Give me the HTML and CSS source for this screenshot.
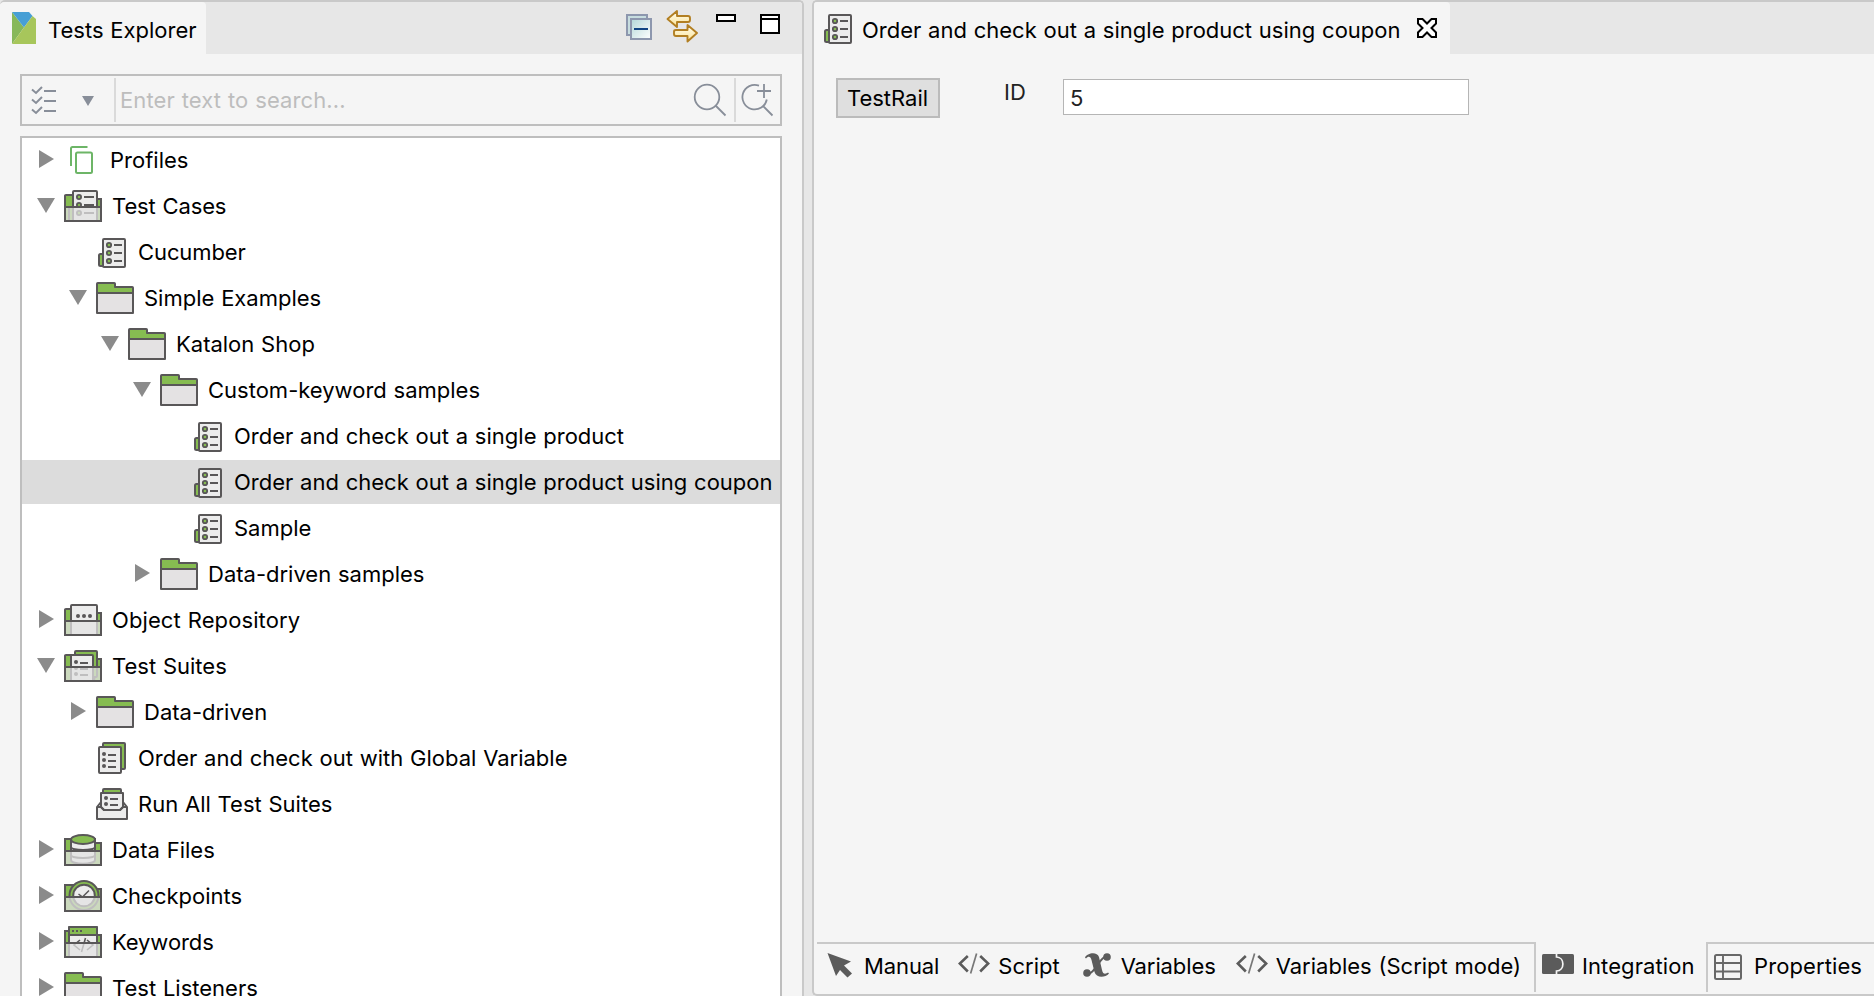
FILE: index.html
```html
<!DOCTYPE html>
<html lang="en">
<head>
<meta charset="utf-8">
<title>Tests Explorer</title>
<link rel="stylesheet" href="styles.css">
</head>
<body>
<svg class="sprite" aria-hidden="true">
  <defs>
    <symbol id="i-closed" viewBox="0 0 18 44"><path d="M2 12L17 21L2 30Z" fill="#8b8b8b"/></symbol>
    <symbol id="i-open" viewBox="0 0 18 44"><path d="M0 14H18L9 29Z" fill="#8b8b8b"/></symbol>
    <symbol id="i-profiles" viewBox="0 0 32 32"><g fill="none" stroke="#6db567" stroke-width="2"><path d="M21.500 3H6.500Q5 3 5 4.500V22"/><rect x="10" y="8.500" width="16" height="20.500" rx="1.500"/></g></symbol>
    <symbol id="i-folder" viewBox="0 0 38 32"><path d="M1 11V1.800Q1 1 1.800 1H18.200Q19 1 19 1.800V5H36.200Q37 5 37 5.800V11Z" fill="#86bc51"/><path d="M1 11H37V31H1Z" fill="#e4e2e3"/><path d="M1 11V1.800Q1 1 1.800 1H18.200Q19 1 19 1.800V5H36.200Q37 5 37 5.800V31H1V11H37" fill="none" stroke="#595758" stroke-width="2" stroke-linejoin="round"/></symbol>
    <symbol id="i-case" viewBox="0 0 32 32"><rect x="3" y="18" width="6" height="12" rx="1.500" fill="#86bc51" stroke="#595758" stroke-width="2"/><rect x="7" y="3" width="22" height="28" rx="1" fill="#ececec" stroke="#595758" stroke-width="2"/><g fill="#86bc51" stroke="#595758" stroke-width="1.800"><circle cx="13" cy="9" r="2.200"/><circle cx="13" cy="17" r="2.200"/><circle cx="13" cy="25" r="2.200"/></g><path d="M18 9H26M18 17H26M18 25H26" stroke="#595758" stroke-width="2"/></symbol>
    <symbol id="i-veil" viewBox="0 0 38 32"><rect x="1" y="17" width="36" height="14" fill="#e2e2e2" fill-opacity=".74"/><rect x="1" y="17" width="36" height="14" fill="none" stroke="#595758" stroke-width="2" stroke-linejoin="round"/></symbol>
    <symbol id="i-cases" viewBox="0 0 38 32">
      <path d="M1 31V5.500Q1 5 2 5H9V31ZM33 9H37V31H33Z" fill="#86bc51" stroke="#595758" stroke-width="2"/>
      <rect x="9" y="1" width="24" height="30" rx="1" fill="#ececec" stroke="#595758" stroke-width="2"/>
      <g fill="#86bc51" stroke="#595758" stroke-width="1.800"><circle cx="15" cy="7" r="2.100"/><circle cx="15" cy="15" r="2.100"/><circle cx="15" cy="23" r="2.100"/></g><path d="M20 7H30M20 15H30M20 23H30" stroke="#595758" stroke-width="2"/><path d="M5 18V31" stroke="#595758" stroke-width="2"/>
      <use href="#i-veil"/>
    </symbol>
    <symbol id="i-objects" viewBox="0 0 38 32">
      <path d="M1 31V5.500Q1 5 2 5H7V31ZM33 9H37V31H33Z" fill="#86bc51" stroke="#595758" stroke-width="2"/>
      <rect x="7" y="1" width="26" height="30" rx="1" fill="#ececec" stroke="#595758" stroke-width="2"/>
      <g fill="#595758"><circle cx="14" cy="12" r="2"/><circle cx="20" cy="12" r="2"/><circle cx="26" cy="12" r="2"/></g>
      <use href="#i-veil"/>
    </symbol>
    <symbol id="i-suites" viewBox="0 0 38 32">
      <path d="M1 31V5.500Q1 5 2 5H7V31ZM33 9H37V31H30Z" fill="#86bc51" stroke="#595758" stroke-width="2"/>
      <rect x="11" y="1" width="22" height="26" rx="1" fill="#86bc51" stroke="#595758" stroke-width="2"/>
      <rect x="7" y="5" width="22" height="30" rx="1" fill="#ececec" stroke="#595758" stroke-width="2"/>
      <g fill="#595758"><circle cx="12" cy="12" r="2"/><circle cx="12" cy="18" r="2"/><circle cx="12" cy="24" r="2"/></g><path d="M16 13H24M16 19H24M16 25H24" stroke="#595758" stroke-width="2"/>
      <use href="#i-veil"/>
    </symbol>
    <symbol id="i-suite" viewBox="0 0 32 32"><rect x="7" y="1" width="22" height="26" rx="1" fill="#86bc51" stroke="#595758" stroke-width="2"/><rect x="3" y="5" width="22" height="26" rx="1" fill="#ececec" stroke="#595758" stroke-width="2"/><g fill="#595758"><circle cx="8" cy="12" r="2"/><circle cx="8" cy="18" r="2"/><circle cx="8" cy="24" r="2"/></g><path d="M12 13H20M12 19H20M12 25H20" stroke="#595758" stroke-width="2"/></symbol>
    <symbol id="i-runall" viewBox="0 0 32 32"><rect x="7" y="1" width="18" height="8" rx="1" fill="#86bc51" stroke="#595758" stroke-width="2"/><path d="M5 14L1 19V31H31V19L27 14" fill="#ececec" stroke="#595758" stroke-width="2" stroke-linejoin="round"/><path d="M5 5H27V19L24 22H8L5 19Z" fill="#ececec" stroke="#595758" stroke-width="2" stroke-linejoin="round"/><path d="M1 19H5L8 22H24L27 19H31" fill="none" stroke="#595758" stroke-width="2"/><g fill="#595758"><circle cx="10" cy="10" r="2"/><circle cx="10" cy="16" r="2"/></g><path d="M14 11H22M14 17H22" stroke="#595758" stroke-width="2"/></symbol>
    <symbol id="i-data" viewBox="0 0 38 32">
      <path d="M1 31V5H15V9H37V31Z" fill="#86bc51" stroke="#595758" stroke-width="2"/>
      <path d="M7 5V26C7 31 31 31 31 26V5Z" fill="#ececec" stroke="#595758" stroke-width="2"/><path d="M7 13C7 17 31 17 31 13M7 21C7 25 31 25 31 21" fill="none" stroke="#595758" stroke-width="2"/><ellipse cx="19" cy="5.500" rx="12" ry="4.500" fill="#86bc51" stroke="#595758" stroke-width="2"/>
      <use href="#i-veil"/>
    </symbol>
    <symbol id="i-check" viewBox="0 0 38 32">
      <path d="M1 31V5H15V9H37V31Z" fill="#86bc51" stroke="#595758" stroke-width="2"/>
      <circle cx="20" cy="15.500" r="14.500" fill="#86bc51" stroke="#595758" stroke-width="2"/><circle cx="20" cy="15.500" r="10.800" fill="#ececec" stroke="#595758" stroke-width="2"/><path d="M14.500 14L18.500 17L25 10.500" fill="none" stroke="#595758" stroke-width="1.500"/>
      <use href="#i-veil"/>
    </symbol>
    <symbol id="i-keys" viewBox="0 0 38 32">
      <path d="M1 31V5H5V31ZM33 9H37V31H33Z" fill="#86bc51" stroke="#595758" stroke-width="2"/>
      <rect x="5" y="1" width="28" height="30" rx="1" fill="#ececec" stroke="#595758" stroke-width="2"/><path d="M5 1H33V9H5Z" fill="#86bc51" stroke="#595758" stroke-width="2" stroke-linejoin="round"/><path d="M8 5H10M12 5H14M16 5H18" stroke="#595758" stroke-width="2"/><path d="M16 14L10 19L16 24M23 14L29 19L23 24M21.500 12L17.500 26" fill="none" stroke="#595758" stroke-width="1.600"/>
      <use href="#i-veil"/>
    </symbol>
    <symbol id="i-code" viewBox="0 0 32 22"><path d="M9.800 3L1.800 10.500L9.800 18.500M22.200 3L30.200 10.500L22.200 18.500" fill="none" stroke="#5b5b5b" stroke-width="2.600"/><path d="M18.600 .5L12.600 20.500" stroke="#777" stroke-width="1.700"/></symbol>
  </defs>
</svg>
<main class="workbench">
  <section class="explorer">
    <header class="bar">
      <div class="tab tab-explorer">
        <svg class="logo" width="24" height="32" viewBox="0 0 24 32"><path d="M0 0L12 15.500L0 32Z" fill="#87b85a"/><path d="M0 0H17L20.500 4L12 15.500Z" fill="#479fd5"/><path d="M20.500 4L24 7V32H0L12 15.500Z" fill="#a7c65b"/></svg>
        <span class="label">Tests Explorer</span>
      </div>
      <svg class="tools" width="156" height="34" viewBox="0 0 156 34">
        <defs><linearGradient id="g" x1="0" y1="0" x2="1" y2="1"><stop offset="0" stop-color="#b2d7d9"/><stop offset="1" stop-color="#fff"/></linearGradient><linearGradient id="y" x1="0" y1="0" x2="0" y2="1"><stop offset="0" stop-color="#fffdf2"/><stop offset="1" stop-color="#fbe393"/></linearGradient></defs>
        <rect x="1" y="5" width="20" height="20" fill="#c7dddf" stroke="#8d97ae" stroke-width="2"/><rect x="5" y="9" width="20" height="20" fill="url(#g)" stroke="#8d97ae" stroke-width="2"/><path d="M8 19H22" stroke="#104583" stroke-width="2.200"/>
        <g fill="url(#y)" stroke="#b27f22" stroke-width="1.900" stroke-linejoin="round"><path d="M41.500 9L51 1V6H62Q64 6 64 8V10Q64 12 62 12H51V17Z"/><path d="M71 23L61.500 15V20H50Q48 20 48 21.500V24Q48 26 50 26H61.500V31.500Z"/></g>
        <rect x="91" y="5" width="18" height="6" fill="#fff" stroke="#000" stroke-width="2"/>
        <path d="M135 5H153V23H135ZM135 9H153" fill="#fff" stroke="#000" stroke-width="2"/>
      </svg>
    </header>
    <div class="search">
      <svg class="filter" width="92" height="44" viewBox="0 0 92 44"><g fill="none" stroke="#888e99" stroke-width="2"><path d="M10 11.500L14 15L20 9M10 21.500L14 25L20 19M10 31.500L14 35L20 29M22 13H34M22 23H34M22 33H34"/></g><path d="M60 18H72L66 28Z" fill="#888e99"/></svg>
      <span class="placeholder label">Enter text to search...</span>
      <svg class="find" width="42" height="44" viewBox="0 0 42 44"><g fill="none" stroke="#888e99" stroke-width="1.800"><circle cx="15" cy="19" r="12.300"/><path d="M23.500 27.500L33.500 37.500"/></g></svg>
      <svg class="findmore" width="46" height="44" viewBox="0 0 44 44"><g fill="none" stroke="#888e99" stroke-width="1.800"><path d="M23 7.600A12.300 12.300 0 1 0 30.800 21.500M26.500 27.500L36.500 37.500M28 6V20M21 13H35"/></g></svg>
    </div>
    <div class="tree">
      <div class="row"><svg class="arrow"><use href="#i-closed"/></svg><svg class="ic narrow profile"><use href="#i-profiles"/></svg><span class="label">Profiles</span></div>
      <div class="row"><svg class="arrow"><use href="#i-open"/></svg><svg class="ic"><use href="#i-cases"/></svg><span class="label tight">Test Cases</span></div>
      <div class="row l1"><i class="arrow"></i><svg class="ic narrow"><use href="#i-case"/></svg><span class="label tight">Cucumber</span></div>
      <div class="row l1"><svg class="arrow"><use href="#i-open"/></svg><svg class="ic"><use href="#i-folder"/></svg><span class="label">Simple Examples</span></div>
      <div class="row l2"><svg class="arrow"><use href="#i-open"/></svg><svg class="ic"><use href="#i-folder"/></svg><span class="label">Katalon Shop</span></div>
      <div class="row l3"><svg class="arrow"><use href="#i-open"/></svg><svg class="ic"><use href="#i-folder"/></svg><span class="label">Custom-keyword samples</span></div>
      <div class="row l4"><i class="arrow"></i><svg class="ic narrow"><use href="#i-case"/></svg><span class="label">Order and check out a single product</span></div>
      <div class="row l4 selected"><i class="arrow"></i><svg class="ic narrow"><use href="#i-case"/></svg><span class="label">Order and check out a single product using coupon</span></div>
      <div class="row l4"><i class="arrow"></i><svg class="ic narrow"><use href="#i-case"/></svg><span class="label">Sample</span></div>
      <div class="row l3"><svg class="arrow"><use href="#i-closed"/></svg><svg class="ic"><use href="#i-folder"/></svg><span class="label">Data-driven samples</span></div>
      <div class="row"><svg class="arrow"><use href="#i-closed"/></svg><svg class="ic"><use href="#i-objects"/></svg><span class="label loose">Object Repository</span></div>
      <div class="row"><svg class="arrow"><use href="#i-open"/></svg><svg class="ic"><use href="#i-suites"/></svg><span class="label">Test Suites</span></div>
      <div class="row l1"><svg class="arrow"><use href="#i-closed"/></svg><svg class="ic"><use href="#i-folder"/></svg><span class="label">Data-driven</span></div>
      <div class="row l1"><i class="arrow"></i><svg class="ic narrow"><use href="#i-suite"/></svg><span class="label">Order and check out with Global Variable</span></div>
      <div class="row l1"><i class="arrow"></i><svg class="ic narrow"><use href="#i-runall"/></svg><span class="label">Run All Test Suites</span></div>
      <div class="row"><svg class="arrow"><use href="#i-closed"/></svg><svg class="ic"><use href="#i-data"/></svg><span class="label">Data Files</span></div>
      <div class="row"><svg class="arrow"><use href="#i-closed"/></svg><svg class="ic"><use href="#i-check"/></svg><span class="label">Checkpoints</span></div>
      <div class="row"><svg class="arrow"><use href="#i-closed"/></svg><svg class="ic"><use href="#i-keys"/></svg><span class="label tight">Keywords</span></div>
      <div class="row"><svg class="arrow"><use href="#i-closed"/></svg><svg class="ic"><use href="#i-folder"/></svg><span class="label">Test Listeners</span></div>
    </div>
  </section>
  <section class="editor">
    <header class="bar">
      <div class="tab tab-editor">
        <svg class="doc" width="32" height="32"><use href="#i-case"/></svg>
        <span class="label">Order and check out a single product using coupon</span>
        <svg class="close" width="22" height="22" viewBox="0 0 22 22"><path d="M2 2H6.500L11 6.500L15.500 2H20V6.500L15.500 11L20 15.500V20H15.500L11 15.500L6.500 20H2V15.500L6.500 11L2 6.500Z" fill="#fff" stroke="#000" stroke-width="2"/></svg>
      </div>
    </header>
    <div class="form">
      <button class="provider">TestRail</button>
      <label class="id-label" for="case-id">ID</label>
      <input class="id-input" id="case-id" value="5">
    </div>
    <nav class="pages">
      <div class="group">
        <svg class="p-manual" width="26" height="26" viewBox="0 0 26 26"><path d="M.500 1L24 9.500L17 13.500L25 21.500L20.500 25.500L13 18L9 24Z" fill="#5b5b5b"/></svg><span class="label tight">Manual</span>
        <svg class="p-code" width="32" height="22"><use href="#i-code"/></svg><span class="label">Script</span>
        <svg class="p-var" width="28" height="24" viewBox="0 0 28 24"><path d="M2 4.500C4 0 14-2 16 4L19 17C20 22 23 21 25 19.500L26 20.500C22 25 13 25 11.500 19L8.500 7C7.500 3 5 3 3 5.500Z" fill="#5b5b5b"/><path d="M24 3C16 4 13 20 5 21" fill="none" stroke="#5b5b5b" stroke-width="2.200"/><circle cx="24" cy="4" r="3.800" fill="#5b5b5b"/><circle cx="4" cy="20" r="3.800" fill="#5b5b5b"/></svg><span class="label tight">Variables</span>
        <svg class="p-code mode" width="32" height="22"><use href="#i-code"/></svg><span class="label">Variables (Script mode)</span>
      </div>
      <div class="group current">
        <svg class="p-int" width="32" height="20" viewBox="0 0 32 20"><rect width="32" height="20" rx="1.500" fill="#5b5b5b"/><path d="M14.500 0V3C23 3 23 17 14.500 17V20" fill="none" stroke="#f5f5f5" stroke-width="1.700"/></svg><span class="label loose">Integration</span>
      </div>
      <div class="group last">
        <svg class="p-prop" width="28" height="26" viewBox="0 0 28 26"><rect x="1" y="1" width="26" height="24" rx="1.500" fill="none" stroke="#686868" stroke-width="2"/><path d="M9 1V25M1 9H27M1 17.500H27" stroke="#686868" stroke-width="1.900"/></svg><span class="label loose">Properties</span>
      </div>
    </nav>
  </section>
</main>
</body>
</html>
```
FILE: styles.css
```css
* { box-sizing: border-box; }
body { margin: 0; background: #e7e7e7; font: 22px/44px Inter, "Liberation Sans", sans-serif; color: #000; overflow: hidden; }
svg { display: block; flex: none; }
.sprite { position: absolute; width: 0; height: 0; }
.label { white-space: nowrap; flex: none; word-spacing: .6px; }
.loose { letter-spacing: .1px; }
.tight { letter-spacing: -.1px; }

.workbench { display: flex; gap: 8px; width: 1874px; height: 996px; }
.explorer { width: 804px; border-top: 2px solid #c9c9c9; border-right: 2px solid #c9c9c9; border-radius: 5px 5px 0 0; background: #f5f5f5; overflow: hidden; }
.editor { flex: 1; min-width: 0; display: flex; flex-direction: column; border: 2px solid #c9c9c9; border-right: 0; border-radius: 5px 0 0 5px; background: #f5f5f5; overflow: hidden; }

.bar { height: 52px; display: flex; justify-content: space-between; background: #e7e7e7; }
.tab { display: flex; height: 52px; background: #f5f5f5; border-radius: 0 4px 0 0; }
.tab .label { line-height: 56px; }
.tab-explorer { width: 206px; padding-left: 12px; gap: 12px; }
.logo { margin-top: 10px; }
.tools { margin: 8px 20px 0 0; }
.tab-editor { width: 636px; padding-left: 8px; gap: 8px; }
.doc { margin-top: 10px; }
.close { margin: 15px 0 0 7px; }

.search { display: flex; width: 762px; height: 52px; margin: 20px 0 10px 20px; padding: 2px 0; border: 2px solid #bebebe; }
.placeholder { flex: 1; padding-left: 4px; border-left: 2px solid #dadada; color: #bdbdbd; letter-spacing: .1px; }
.findmore { border-left: 2px solid #dadada; }

.tree { width: 762px; height: 900px; margin-left: 20px; border: 2px solid #bebebe; background: #fff; }
.row { display: flex; height: 44px; margin-bottom: 2px; padding-left: 15px; }
.selected { background: #dcdcdc; }
.l1 { padding-left: 47px; }
.l2 { padding-left: 79px; }
.l3 { padding-left: 111px; }
.l4 { padding-left: 143px; }
.arrow { width: 18px; height: 44px; margin-right: 9px; flex: none; }
.ic { width: 38px; height: 32px; margin: 6px 10px 0 0; }
.narrow { width: 32px; }
.profile { margin-left: 2px; margin-right: 12px; }

.form { display: flex; flex: 1; padding: 24px 0 0 22px; }
.provider { width: 104px; height: 40px; padding: 0 1px 0 0; border: 2px solid #bbb; background: #dfdfdf; font: inherit; line-height: 36px; color: #000; }
.id-label { width: 59px; margin-left: 64px; line-height: 28px; color: #222; }
.id-input { width: 406px; height: 36px; margin-top: 1px; padding: 2px 0 0 6px; border: 1px solid #b5b5b5; background: #fff; font: inherit; color: #222; }

.pages { display: flex; height: 52px; padding-left: 3px; }
.group { display: flex; width: 719px; height: 50px; border-top: 2px solid #c9c9c9; border-right: 2px solid #c9c9c9; line-height: 45px; }
.current { width: 170px; border-color: transparent; border-right: 0; }
.last { flex: 1; border-right: 0; border-left: 2px solid #c9c9c9; }
.p-manual { margin: 8px 11px 0 10px; }
.p-code { margin: 9px 8px 0 19px; }
.p-var { margin: 9px 10px 0 23px; }
.mode { margin-left: 20px; }
.p-int { margin: 10px 8px 0 6px; }
.p-prop { margin: 10px 12px 0 6px; }
```
